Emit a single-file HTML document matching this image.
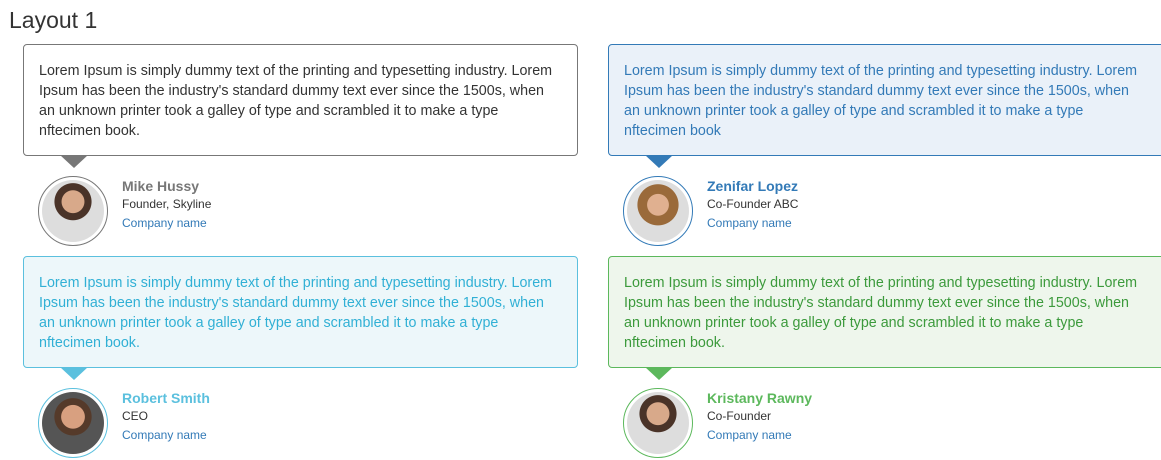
<html><head><style>
body{margin:0;width:1161px;height:460px;overflow:hidden;background:#fff;font-family:"Liberation Sans",sans-serif;position:relative}
h1{position:absolute;left:9px;top:7px;margin:0;font-size:23px;font-weight:normal;color:#333}
.card{position:absolute;width:555px;height:112px;border:1px solid;border-radius:4px;box-sizing:border-box;padding:16px 15px;font-size:14.3px;line-height:20px;white-space:nowrap}
.tri{position:absolute;width:0;height:0;border-left:14px solid transparent;border-right:14px solid transparent;border-top:13px solid}
.av{position:absolute;width:70px;height:70px;border:1px solid;border-radius:50%;box-sizing:border-box;padding:3px}
.av div{width:100%;height:100%;border-radius:50%;background:radial-gradient(circle at 50% 35%,#d8a98a 0 22%,#4a3328 23% 36%,#ddd 37%)}
.nm{position:absolute;font-size:14px;font-weight:bold}
.r{position:absolute;font-size:12px;color:#333}
.c{position:absolute;font-size:12px;color:#337ab7}
</style></head><body>
<h1>Layout 1</h1>

<div class="card" style="left:23px;top:44px;border-color:#777;color:#333;background:#fff">Lorem Ipsum is simply dummy text of the printing and typesetting industry. Lorem<br>Ipsum has been the industry's standard dummy text ever since the 1500s, when<br>an unknown printer took a galley of type and scrambled it to make a type<br>nftecimen book.</div>
<div class="tri" style="left:60px;top:155px;border-top-color:#777"></div>
<div class="av" style="left:38px;top:176px;border-color:#777"><div></div></div>
<div class="nm" style="left:122px;top:178px;color:#777">Mike Hussy</div>
<div class="r" style="left:122px;top:197px">Founder, Skyline</div>
<div class="c" style="left:122px;top:216px">Company name</div>

<div class="card" style="left:608px;top:44px;border-color:#337ab7;color:#337ab7;background:#eaf1f9;width:560px">Lorem Ipsum is simply dummy text of the printing and typesetting industry. Lorem<br>Ipsum has been the industry's standard dummy text ever since the 1500s, when<br>an unknown printer took a galley of type and scrambled it to make a type<br>nftecimen book</div>
<div class="tri" style="left:645px;top:155px;border-top-color:#337ab7"></div>
<div class="av" style="left:623px;top:176px;border-color:#337ab7"><div style="background:radial-gradient(circle at 50% 40%,#e0b090 0 22%,#9a6a3a 23% 42%,#ddd 43%)"></div></div>
<div class="nm" style="left:707px;top:178px;color:#337ab7">Zenifar Lopez</div>
<div class="r" style="left:707px;top:197px">Co-Founder ABC</div>
<div class="c" style="left:707px;top:216px">Company name</div>

<div class="card" style="left:23px;top:256px;border-color:#5bc0de;color:#31b0d5;background:#edf7fa">Lorem Ipsum is simply dummy text of the printing and typesetting industry. Lorem<br>Ipsum has been the industry's standard dummy text ever since the 1500s, when<br>an unknown printer took a galley of type and scrambled it to make a type<br>nftecimen book.</div>
<div class="tri" style="left:60px;top:367px;border-top-color:#5bc0de"></div>
<div class="av" style="left:38px;top:388px;border-color:#5bc0de"><div style="background:radial-gradient(circle at 50% 40%,#d8a080 0 24%,#553a2a 25% 38%,#555 39%)"></div></div>
<div class="nm" style="left:122px;top:390px;color:#5bc0de">Robert Smith</div>
<div class="r" style="left:122px;top:409px">CEO</div>
<div class="c" style="left:122px;top:428px">Company name</div>

<div class="card" style="left:608px;top:256px;border-color:#5cb85c;color:#3c9a3c;background:#eef6ec;width:560px">Lorem Ipsum is simply dummy text of the printing and typesetting industry. Lorem<br>Ipsum has been the industry's standard dummy text ever since the 1500s, when<br>an unknown printer took a galley of type and scrambled it to make a type<br>nftecimen book.</div>
<div class="tri" style="left:645px;top:367px;border-top-color:#5cb85c"></div>
<div class="av" style="left:623px;top:388px;border-color:#5cb85c"><div></div></div>
<div class="nm" style="left:707px;top:390px;color:#5cb85c">Kristany Rawny</div>
<div class="r" style="left:707px;top:409px">Co-Founder</div>
<div class="c" style="left:707px;top:428px">Company name</div>
</body></html>
